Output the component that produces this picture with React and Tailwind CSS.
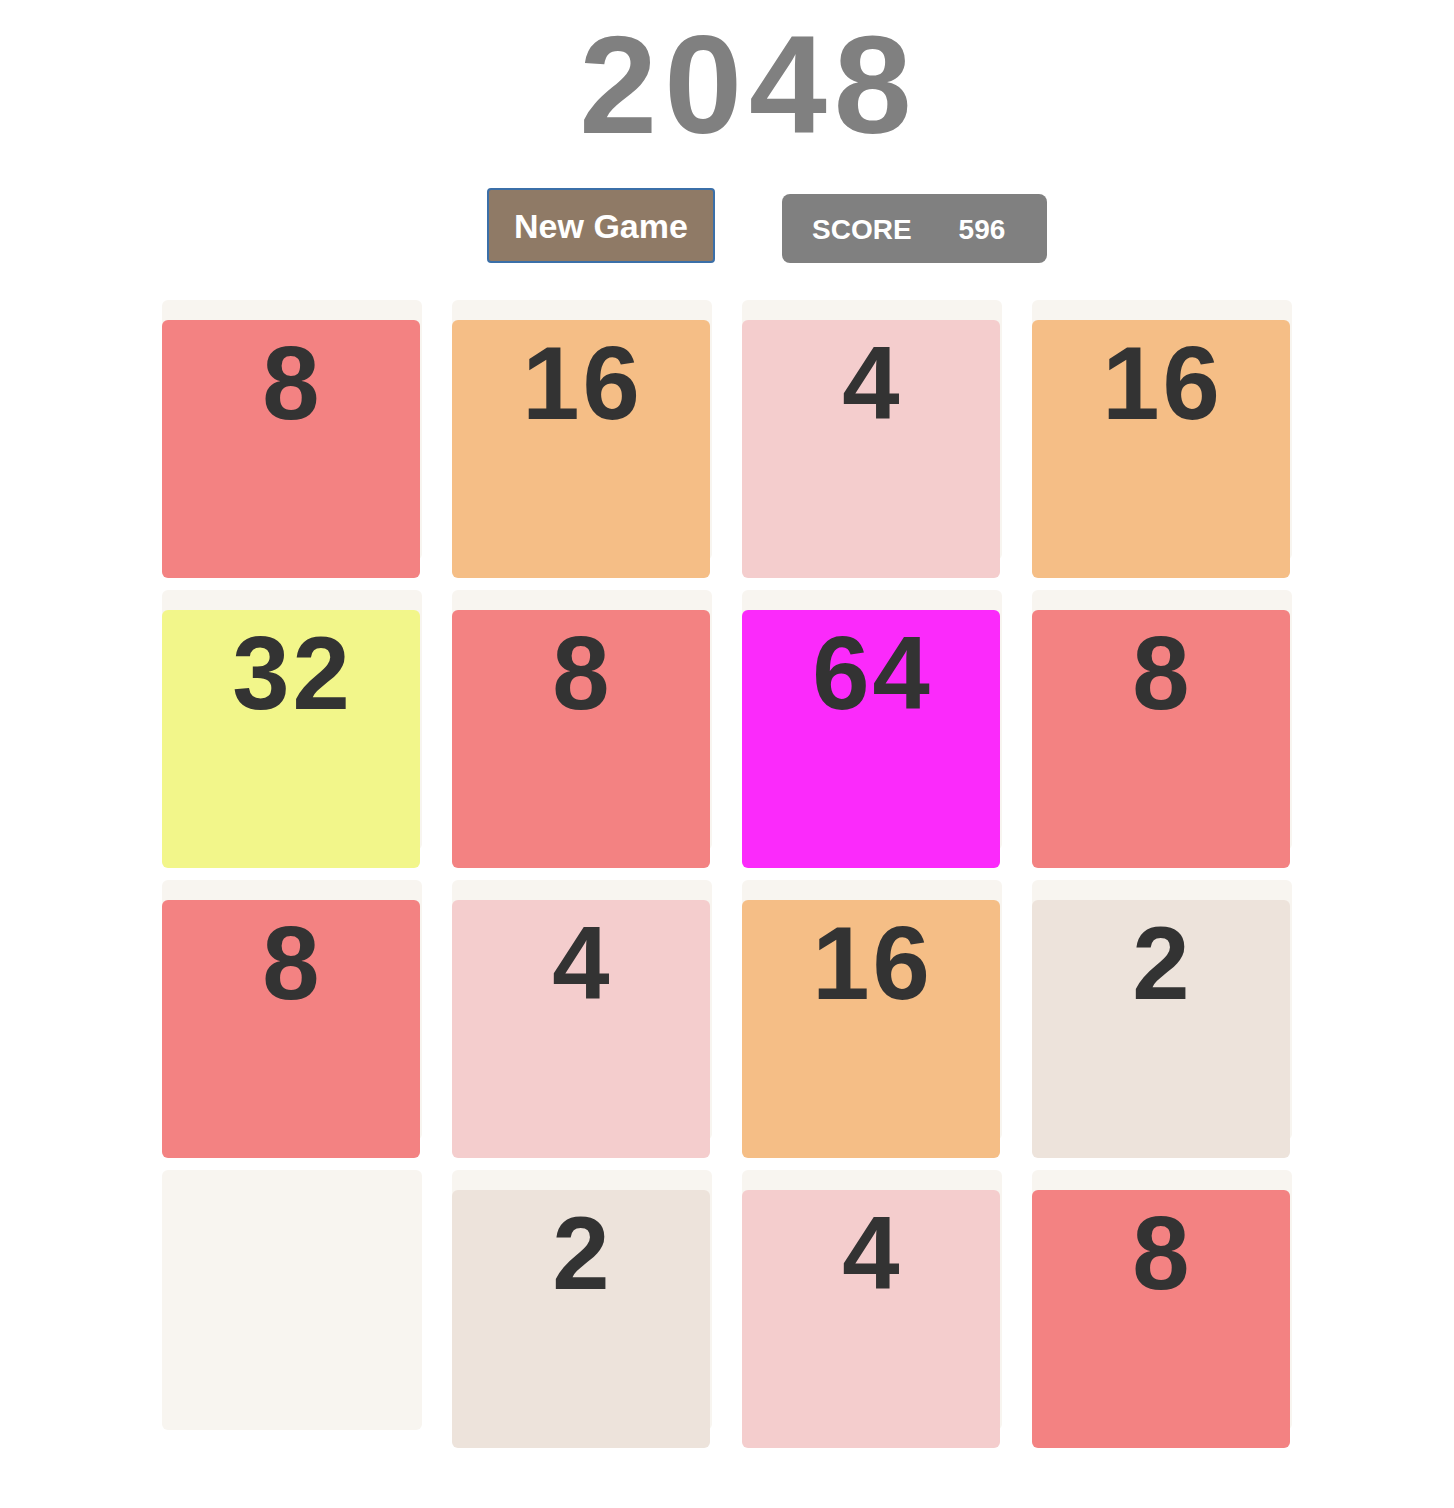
import React from "react";

// Board state, row by row (0 = empty cell)
const BOARD = [
    [8, 16, 4, 16],
    [32, 8, 64, 8],
    [8, 4, 16, 2],
    [0, 2, 4, 8],
];

const TILE_COLORS = {
    2: "bg-[#ede3db]",
    4: "bg-[#f4cdcd]",
    8: "bg-[#f38282]",
    16: "bg-[#f5be86]",
    32: "bg-[#f2f68a]",
    64: "bg-[#fb2afb]",
};

const Cell = ({ value }) => (
    <div className="h-[260px] w-[260px] rounded-md bg-[#f8f5f0]">
        {value > 0 && (
            <div
                className={`mt-[20px] h-[258px] w-[258px] rounded-md ${TILE_COLORS[value]} pl-[3px] pt-[12px] text-center text-[103px] font-bold leading-none tracking-[3px] text-[#333333]`}
            >
                {value}
            </div>
        )}
    </div>
);

export default function App() {
    return (
        <div
            className="min-h-screen bg-white pt-[15px]"
            style={{ fontFamily: '"Liberation Sans", Arial, sans-serif' }}
        >
            <h1 className="pl-[44px] text-center text-[140px] font-bold leading-none tracking-[7px] text-[#808080]">
                2048
            </h1>

            <div className="mt-[33px] flex items-end justify-center gap-[67px] pl-[80px]">
                <button className="flex h-[75px] w-[228px] items-center justify-center rounded-[4px] border-2 border-[#3b6fa8] bg-[#8f7a66] pt-[1px] text-[34px] font-bold text-white">
                    New Game
                </button>
                <div className="flex h-[69px] w-[265px] items-center rounded-lg bg-[#808080] pl-[30px] pt-[2px] text-[28px] font-bold text-white">
                    <span>SCORE</span>
                    <span className="ml-[47px]">596</span>
                </div>
            </div>

            <div className="ml-[162px] mt-[37px] grid w-[1132px] grid-cols-[repeat(4,260px)] gap-x-[30px] gap-y-[30px]">
                {BOARD.flat().map((v, i) => (
                    <Cell key={i} value={v} />
                ))}
            </div>
        </div>
    );
}
